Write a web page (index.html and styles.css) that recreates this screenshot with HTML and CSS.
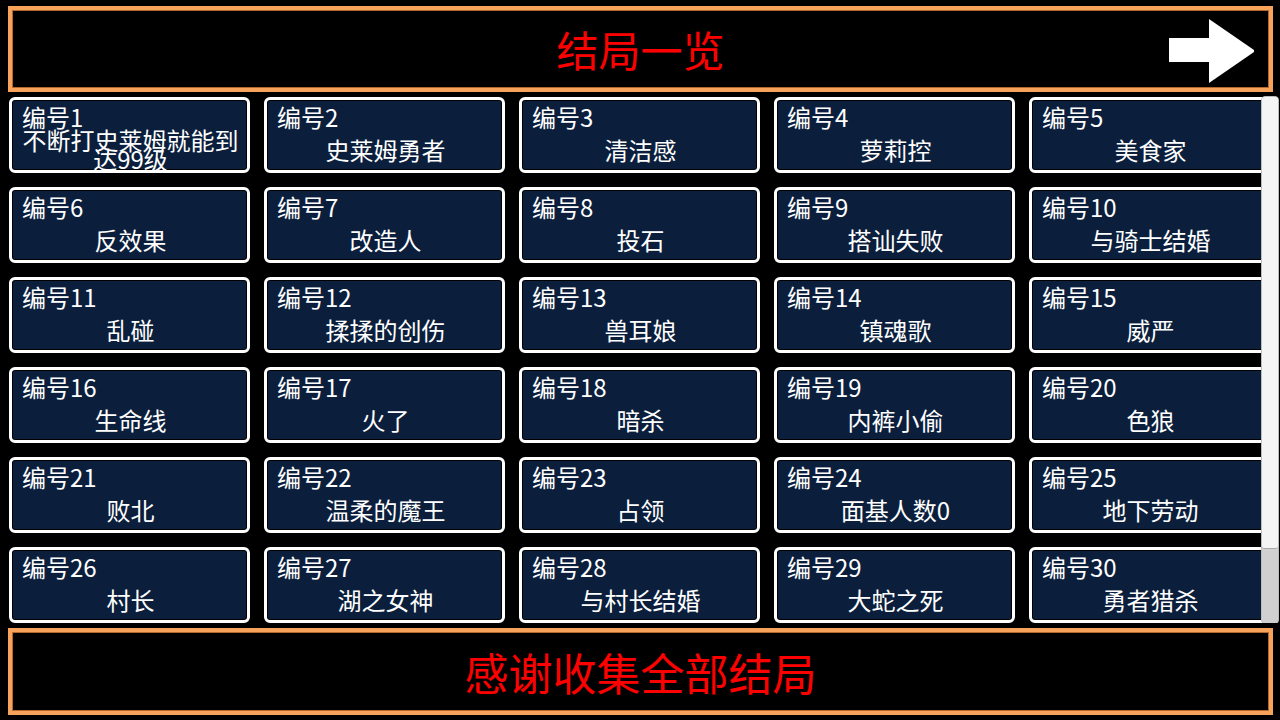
FILE: index.html
```html
<!DOCTYPE html>
<html lang="zh-CN">
<head>
  <meta charset="UTF-8">
  <meta name="viewport" content="width=device-width, initial-scale=1.0">
  <title>结局一览</title>
  <link rel="stylesheet" href="styles.css">
</head>
<body>
  <div class="screen">
    <header class="banner">
      <span></span>
      <h1 class="banner-title">结局一览</h1>
      <button class="next-btn" aria-label="下一页">
        <svg width="85" height="64" viewBox="0 0 85 64">
          <rect x="0" y="19" width="41" height="24" fill="#fff"/>
          <polygon points="40,0 85,31 85,33 40,64" fill="#fff"/>
        </svg>
      </button>
    </header>

    <div class="ending-list">
      <div class="ending-grid" id="endings"></div>
      <div class="scrollbar">
        <div class="scroll-thumb"></div>
      </div>
    </div>

    <footer class="banner banner-footer">
      <p class="footer-text">感谢收集全部结局</p>
    </footer>
  </div>

  <script>
    const endings = [
      '不断打史莱姆就能到达99级', '史莱姆勇者', '清洁感', '萝莉控', '美食家',
      '反效果', '改造人', '投石', '搭讪失败', '与骑士结婚',
      '乱碰', '揉揉的创伤', '兽耳娘', '镇魂歌', '威严',
      '生命线', '火了', '暗杀', '内裤小偷', '色狼',
      '败北', '温柔的魔王', '占领', '面基人数0', '地下劳动',
      '村长', '湖之女神', '与村长结婚', '大蛇之死', '勇者猎杀'
    ];

    const grid = document.getElementById('endings');

    endings.forEach((name, i) => {
      const card = document.createElement('div');
      card.className = 'ending-card';
      card.innerHTML = `
        <div class="ending-no">编号${i + 1}</div>
        <div class="ending-name">${name}</div>
      `;
      grid.appendChild(card);
    });
  </script>
</body>
</html>
```

FILE: styles.css
```css
body {
  margin: 0;
  padding: 0;
  background-color: #000;
  font-family: "Noto Sans CJK SC", "Noto Sans", sans-serif;
  color: #fff;
}

.screen {
  width: 1280px;
  height: 720px;
  overflow: hidden;
  display: flex;
  flex-direction: column;
}

.banner {
  margin: 6px 7px 0 8px;
  height: 86px;
  box-sizing: border-box;
  border: 4px solid #f7a35c;
  box-shadow: inset 0 0 0 1px #b4682e;
  display: grid;
  grid-template-columns: 1fr auto 1fr;
  align-items: center;
}

.banner-title {
  margin: 0;
  font-size: 42px;
  font-weight: normal;
  line-height: 1;
  color: #ff0000;
}

.next-btn {
  justify-self: end;
  margin: 4px 15px 0 0;
  padding: 0;
  border: none;
  background: none;
  line-height: 0;
  cursor: pointer;
}

.ending-list {
  position: relative;
  margin-top: 4px;
  height: 527px;
  overflow: hidden;
}

.ending-grid {
  display: grid;
  grid-template-columns: repeat(5, 241px);
  grid-auto-rows: 76px;
  gap: 14px;
  padding: 1px 0 0 9px;
}

.ending-card {
  display: flex;
  flex-direction: column;
  border: 3px solid #fff;
  border-radius: 6px;
  background-color: #0b1f3d;
  box-shadow: inset 0 0 0 1px #000;
  padding: 3px 8px 2px 10px;
}

.ending-no {
  height: 27px;
  font-size: 24px;
  line-height: 27px;
}

.ending-name {
  flex: 1;
  display: flex;
  align-items: center;
  justify-content: center;
  text-align: center;
  font-size: 24px;
  line-height: 19px;
}

.scrollbar {
  position: absolute;
  top: 0;
  right: 1px;
  width: 16px;
  height: 526px;
  border: 1px solid #bcbcbc;
  border-radius: 4px;
  background-color: #d0d0d0;
  overflow: hidden;
}

.scroll-thumb {
  height: 451px;
  background-color: #f4f4f4;
  border-bottom: 1px solid #a8a8a8;
  border-radius: 0 0 3px 3px;
}

.banner-footer {
  display: flex;
  justify-content: center;
  margin-top: 5px;
  height: 87px;
}

.footer-text {
  margin: 0;
  font-size: 44px;
  line-height: 1;
  color: #ff0000;
}
```
